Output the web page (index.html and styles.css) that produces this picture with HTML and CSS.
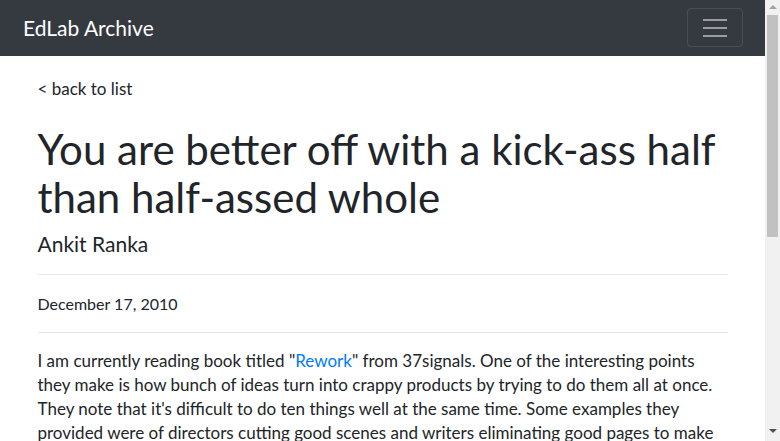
FILE: index.html
```html
<!DOCTYPE html>
<html lang="en">
<head>
<meta charset="utf-8">
<title>EdLab Archive</title>
<link rel="stylesheet" href="styles.css">
</head>
<body>
<div class="page">
  <nav class="navbar">
    <a class="brand" href="#">EdLab Archive</a>
    <button class="toggler" type="button" aria-label="Toggle navigation">
      <svg width="24" height="18" viewBox="0 0 24 18" aria-hidden="true">
        <path stroke="rgba(255,255,255,0.5)" stroke-width="2" d="M0 1h24M0 9h24M0 17h24"/>
      </svg>
    </button>
  </nav>
  <main class="container">
    <p class="back"><a href="#">&lt; back to list</a></p>
    <h1 class="title">You are better off with a kick-ass half than half-assed whole</h1>
    <p class="author">Ankit Ranka</p>
    <hr class="rule">
    <p class="date">December 17, 2010</p>
    <hr class="rule">
    <div class="body">
      <p>I am currently reading book titled "<a class="link" href="#">Rework</a>" from 37signals. One of the interesting points they make is how bunch of ideas turn into crappy products by trying to do them all at once. They note that it's difficult to do ten things well at the same time. Some examples they provided were of directors cutting good scenes and writers eliminating good pages to make better movies and books. Cut your ambitions in half and build a great half product rather than a mediocre whole.</p>
      <p>This advice applies to many projects we work on. Instead of adding every feature we can think of, it is better to focus on the core and make it excellent. Then iterate from there.</p>
      <p>You are better off with a kick-ass half than a half-assed whole.</p>
    </div>
  </main>
</div>
<div class="scrollbar" aria-hidden="true">
  <span class="arrow arrow-up"></span>
  <span class="thumb"></span>
  <span class="arrow arrow-down"></span>
</div>
</body>
</html>
```

FILE: styles.css
```css
html, body {
  margin: 0;
  padding: 0;
}
body {
  font-family: "Lato", "Liberation Sans", sans-serif;
  font-size: 17px;
  line-height: 24px;
  color: #212529;
  background: #fff;
}
.page {
  margin-right: 15px;
}
a {
  color: inherit;
  text-decoration: none;
}
.navbar {
  background: #343a40;
  height: 56px;
  box-sizing: border-box;
  padding: 0 22px 0 23px;
  display: flex;
  align-items: center;
  justify-content: space-between;
}
.brand {
  color: #fff;
  font-size: 21px;
  line-height: 28px;
}
.toggler {
  width: 56px;
  height: 39px;
  margin-top: -1px;
  box-sizing: border-box;
  background: transparent;
  border: 1px solid rgba(255,255,255,0.1);
  border-radius: 4px;
  display: flex;
  align-items: center;
  justify-content: center;
  padding: 0;
}
.toggler svg {
  display: block;
}
.container {
  max-width: 690px;
  margin: 0 auto;
  padding: 0 15px;
}
.back {
  margin: 21px 0 0;
}
.title {
  font-size: 42px;
  line-height: 48px;
  font-weight: 400;
  margin: 24px 0 0;
}
.author {
  font-size: 21px;
  line-height: 28px;
  margin: 9px 0 0;
}
.rule {
  border: 0;
  border-top: 1px solid rgba(0,0,0,0.1);
  margin: 16px 0 0;
}
.date {
  margin: 17px 0 0;
  font-size: 16px;
}
.body {
  margin-top: 16px;
}
.body p {
  margin: 0 0 16px;
}
.link {
  color: #007bff;
}
.scrollbar {
  position: fixed;
  top: 0;
  right: 0;
  width: 15px;
  height: 100%;
  background: #f1f1f1;
  display: flex;
  flex-direction: column;
  align-items: center;
}
.arrow {
  width: 0;
  height: 0;
  border-left: 4px solid transparent;
  border-right: 4px solid transparent;
}
.arrow-up {
  margin-top: 5px;
  border-bottom: 4px solid #a3a3a3;
}
.thumb {
  margin-top: 6px;
  width: 11px;
  height: 222px;
  background: #c1c1c1;
}
.arrow-down {
  margin-top: auto;
  margin-bottom: 8px;
  border-top: 4px solid #505050;
}
```
